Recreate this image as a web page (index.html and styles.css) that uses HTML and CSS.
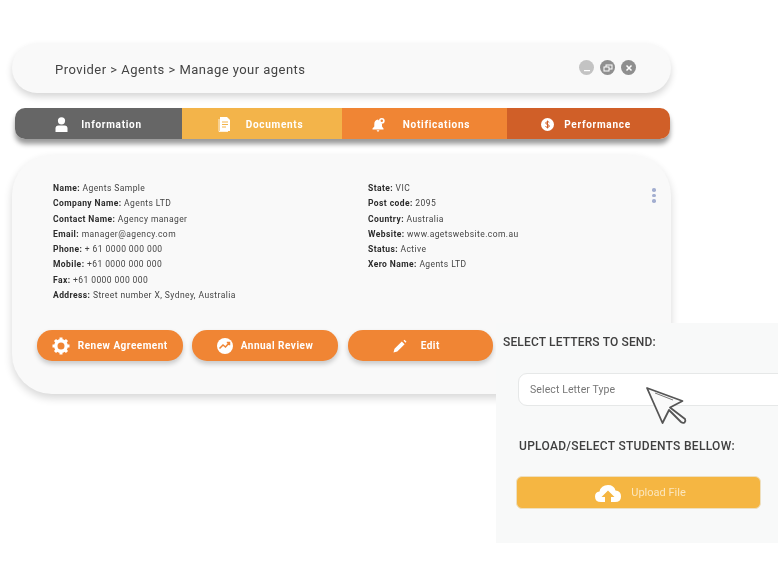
FILE: index.html
```html
<!DOCTYPE html>
<html lang="en">
<head>
  <meta charset="UTF-8">
  <title>Manage your agents</title>
  <link rel="stylesheet" href="styles.css">
</head>
<body>
  <div class="page">
    <div class="topbar">
      <span class="crumbs">Provider &gt; Agents &gt; Manage your agents</span>
      <div class="win-btns">
        <span class="win-btn light"><svg width="8" height="8" viewBox="0 0 8 8"><rect x="1" y="6" width="6" height="1.2" fill="#fff"/></svg></span>
        <span class="win-btn"><svg width="10" height="8" viewBox="0 0 10 8"><rect x="3" y="1" width="6" height="4" fill="none" stroke="#fff"/><rect x="1" y="3" width="5" height="4" fill="#8f8f8f" stroke="#fff"/></svg></span>
        <span class="win-btn"><svg width="8" height="8" viewBox="0 0 8 8"><path d="M1.5 1.5l5 5M6.5 1.5l-5 5" stroke="#fff" stroke-width="1.5"/></svg></span>
      </div>
    </div>

    <div class="tabs">
      <div class="tab tab-info">
        <svg width="13" height="15" viewBox="0 0 13 15"><circle cx="6.5" cy="3.8" r="3.6" fill="#fff"/><path d="M0.5 15v-3.5Q0.5 8.5 3.5 8.5h6q3 0 3 3V15z" fill="#fff"/></svg>
        Information
      </div>
      <div class="tab tab-docs">
        <svg width="13" height="16" viewBox="0 0 13 16"><path d="M2 1h7l3 3v11H2z" fill="#fff"/><path d="M1 3v12.500h9" fill="none" stroke="#fff" stroke-width=".8"/><path d="M4 6h6M4 8.500h6M4 11h4" stroke="#f3b44a" stroke-width="1"/></svg>
        Documents
      </div>
      <div class="tab tab-notif">
        <svg width="14" height="15" viewBox="0 0 14 15"><path d="M6 2.500Q2.300 3 2.300 7v2.500L0.500 11.500v1h11v-1L10 9.500V7" fill="#fff"/><path d="M4.500 13.200h3L6 15z" fill="#fff"/><circle cx="9.800" cy="3.800" r="2.900" fill="#fff"/><circle cx="9.800" cy="3.800" r="1.200" fill="#f08534"/></svg>
        Notifications
      </div>
      <div class="tab tab-perf">
        <svg width="13" height="13" viewBox="0 0 13 13"><circle cx="6.500" cy="6.500" r="6.500" fill="#fff"/><path d="M8.300 4.600Q7.800 3.700 6.500 3.700T4.700 4.900Q4.700 6.100 6.500 6.500T8.300 8.100Q8.300 9.300 6.500 9.300T4.600 8.300M6.500 2.600v7.800" fill="none" stroke="#d05f28" stroke-width="1"/></svg>
        Performance
      </div>
    </div>

    <div class="card">
      <div class="details">
        <div class="col col-left">
          <p><b>Name:</b> Agents Sample</p>
          <p><b>Company Name:</b> Agents LTD</p>
          <p><b>Contact Name:</b> Agency manager</p>
          <p><b>Email:</b> manager@agency.com</p>
          <p><b>Phone:</b> + 61 0000 000 000</p>
          <p><b>Mobile:</b> +61 0000 000 000</p>
          <p><b>Fax:</b> +61 0000 000 000</p>
          <p><b>Address:</b> Street number X, Sydney, Australia</p>
        </div>
        <div class="col">
          <p><b>State:</b> VIC</p>
          <p><b>Post code:</b> 2095</p>
          <p><b>Country:</b> Australia</p>
          <p><b>Website:</b> www.agetswebsite.com.au</p>
          <p><b>Status:</b> Active</p>
          <p><b>Xero Name:</b> Agents LTD</p>
        </div>
      </div>
      <div class="dots"><i></i><i></i><i></i></div>
      <div class="actions">
        <button class="action">
          <svg width="18" height="18" viewBox="0 0 18 18"><circle cx="9" cy="9" r="5.200" fill="none" stroke="#fff" stroke-width="3.400"/><path d="M9 0.500v3M9 14.500v3M0.500 9h3M14.500 9h3M3 3l2.100 2.100M12.900 12.900L15 15M3 15l2.100-2.100M12.900 5.100L15 3" stroke="#fff" stroke-width="3"/></svg>
          Renew Agreement
        </button>
        <button class="action">
          <svg width="16" height="16" viewBox="0 0 16 16"><circle cx="8" cy="8" r="8" fill="#fff"/><path d="M2.500 10.500L6 7l2.500 2L12 5M9.800 4.600h2.700v2.700" fill="none" stroke="#f08534" stroke-width="1.500"/></svg>
          Annual Review
        </button>
        <button class="action action-edit">
          <svg width="14" height="14" viewBox="0 0 14 14"><path d="M0.500 13.500l1-3.800 7.300-7.300 2.800 2.800-7.300 7.300zM10.500 1.700l1-1 2 2-1 1z" fill="#fff"/></svg>
          <span class="edit-label">Edit</span>
        </button>
      </div>
    </div>
  </div>

  <div class="letters">
    <h2 class="letters-title">SELECT LETTERS TO SEND:</h2>
    <div class="select-box">Select Letter Type</div>
    <h2 class="upload-title">UPLOAD/SELECT STUDENTS BELLOW:</h2>
    <div class="upload-btn">
      <svg width="26" height="18" viewBox="0 0 26 18"><path d="M6 18Q0 18 0 12.500Q0 8 4.500 7.500Q6 1 13 1Q19 1 20.500 6.500Q26 7 26 12.500Q26 18 20 18h-4v-5h3.500L13 6.500 6.500 13H10v5z" fill="#fff"/></svg>
      <span>Upload File</span>
    </div>
    <svg class="cursor" width="50" height="50" viewBox="0 0 50 50">
      <path d="M7 8L42.500 21 30 27.500 45 39Q46 41 44.500 42.500 43 43.500 41 42L29 30 22.500 43z" fill="#fafafa" stroke="#555" stroke-width="1.800" stroke-linejoin="round"/>
      <path d="M15 13l18 7" stroke="#777" stroke-width="1"/>
    </svg>
  </div>
</body>
</html>
```

FILE: styles.css
```css
* { box-sizing: border-box; }
html, body { margin: 0; padding: 0; }
body { width: 778px; height: 571px; background: #fff; font-family: 'Roboto', 'Liberation Sans', sans-serif; color: #3d3d3d; overflow: hidden; position: relative; }
.page { padding: 43px 107px 0 12px; filter: blur(0.35px); }

.topbar { height: 50px; background: #f9f9f9; border-radius: 25px; box-shadow: 0 4px 7px rgba(0,0,0,0.16); display: flex; align-items: center; justify-content: space-between; padding: 0 35px 0 43px; margin-bottom: 15px; }
.crumbs { font-size: 13px; letter-spacing: 0.46px; color: #444; margin-top: 2px; }
.win-btns { display: flex; gap: 6px; margin-top: -1px; }
.win-btn { width: 15px; height: 15px; border-radius: 50%; background: #8f8f8f; display: flex; align-items: center; justify-content: center; }
.win-btn.light { background: #c3c3c3; }

.tabs { height: 31px; margin: 0 1px 16px 3px; display: flex; border-radius: 10px; overflow: hidden; box-shadow: 0 5px 5px rgba(0,0,0,0.4); color: #fff; font-size: 10px; font-weight: 700; letter-spacing: 0.72px; }
.tab { display: flex; align-items: center; justify-content: center; padding-top: 1px; }
.tab-info { width: 167px; background: #666; gap: 13px; }
.tab-docs { width: 160px; background: #f3b44a; gap: 15px; padding-right: 3px; }
.tab-notif { width: 165px; background: #f08534; gap: 17px; padding-right: 7px; }
.tab-perf { flex: 1; background: #d05f28; gap: 10px; padding-right: 5px; }

.card { height: 239px; background: #f9f9f9; border-radius: 40px; box-shadow: 0 4px 8px rgba(0,0,0,0.16); padding: 26px 25px 0 25px; position: relative; }
.details { display: flex; padding-left: 16px; height: 149px; }
.col-left { width: 315px; }
.col p { margin: 0; font-size: 8.500px; line-height: 15.300px; letter-spacing: 0.42px; color: #444; white-space: nowrap; }
.col b { color: #2b2b2b; }
.dots { position: absolute; left: 640px; top: 33px; display: flex; flex-direction: column; gap: 2px; }
.dots i { width: 3.500px; height: 3.500px; border-radius: 50%; background: #a3aed0; }

.actions { display: flex; gap: 9.750px; }
.action { width: 145.500px; height: 31px; border: none; border-radius: 15px; background: #f08534; color: #fff; font-family: inherit; font-size: 10px; font-weight: 700; letter-spacing: 0.5px; display: flex; align-items: center; justify-content: center; gap: 8px; box-shadow: 0 3px 5px rgba(0,0,0,0.2); padding: 0; }
.action-edit { padding-right: 8px; }
.edit-label { margin-left: 6px; }

.letters { position: absolute; left: 496px; top: 323px; width: 282px; height: 220px; background: #f8f9f9; padding: 12px 0 0 7px; filter: blur(0.35px); }
.letters-title, .upload-title { margin: 0; font-size: 12px; font-weight: 500; color: #3f3f3f; line-height: 14px; white-space: nowrap; letter-spacing: 0.15px; }
.select-box { margin: 24px -20px 0 15px; height: 33px; background: #fff; border: 1px solid #e6e8e8; border-radius: 9px; font-size: 10.500px; color: #777; line-height: 31px; padding-left: 11px; letter-spacing: 0.1px; }
.upload-title { margin: 33px 0 0 16px; letter-spacing: 0.3px; }
.upload-btn { margin: 23px 17px 0 13px; height: 33px; background: #f5b642; border: 1px solid #eee0c0; border-radius: 6px; display: flex; align-items: center; justify-content: center; gap: 10px; color: #fbe6bd; font-size: 11px; padding-left: 4px; }
.cursor { position: absolute; left: 144px; top: 57px; }
```
